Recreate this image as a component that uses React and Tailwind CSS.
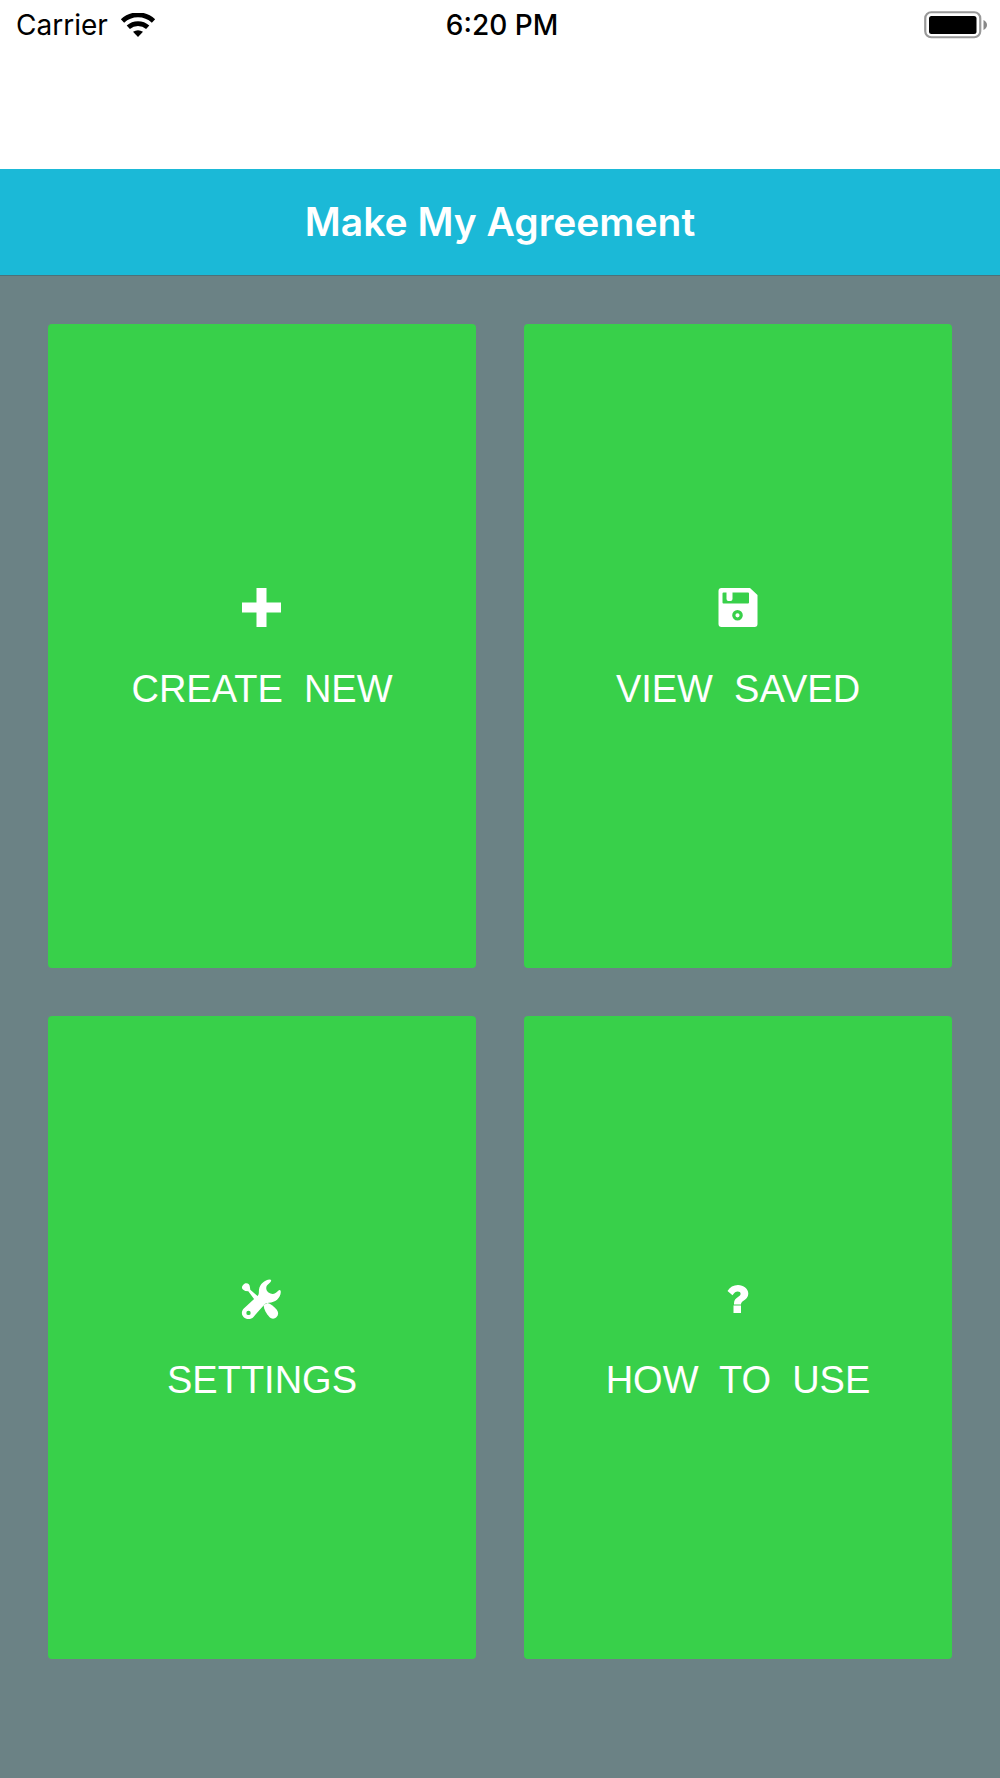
const iconProps = { className: 'size-10 overflow-visible', viewBox: '0 0 40 40', fill: 'currentColor', 'aria-hidden': true };

function PlusIcon() {
  return (
    <svg {...iconProps}>
      <path d="M14.500 1h10v14.500h14.500v10H24.500v14.500H14.500V25.500H0V15.500h14.500z" />
    </svg>
  );
}

function SaveIcon() {
  return (
    <svg {...iconProps} fillRule="evenodd">
      <path d="M3.500 1h28.500l7.500 7v29a3 3 0 0 1-3 3H3.500a3 3 0 0 1-3-3V4a3 3 0 0 1 3-3zM5.500 5.500a1 1 0 0 0-1 1V15.500a1 1 0 0 0 1 1h24.500a1 1 0 0 0 1-1V6.500a1 1 0 0 0-1-1H14.500v6.500a2 2 0 0 1-2 2h-2a2 2 0 0 1-2-2V5.500zM19.500 23a5.300 5.300 0 1 0 0 10.600a5.300 5.300 0 1 0 0-10.600zm0 3.200a2.100 2.100 0 1 1 0 4.200a2.100 2.100 0 1 1 0-4.200z" />
    </svg>
  );
}

function ToolsIcon() {
  return (
    <svg {...iconProps} fillRule="evenodd">
      <path d="M27.800 1.500C22.500 2 17.800 6 17 11.500C16.700 14 17.200 16 16 17.500L1.800 30.500C-2.500 35 1 41 6.500 41C8.500 41 10.200 40.200 11.500 38.900L22 27C23.300 25.300 25 24.900 27 24.800C33 24.500 38.600 20.300 38.800 14C38.800 11.700 37.600 11.300 36.200 12.800C33.500 16.100 30 16.900 26.500 14.500C23.200 11.500 23.500 8.100 27.300 5.300C29.400 3.700 30 1.700 27.800 1.500zM6.500 32.700a2.200 2.200 0 1 1 0 4.400a2.200 2.200 0 1 1 0-4.400z" />
      <path d="M4.200 5.300C6.500 5.300 7.800 6.800 7.900 9L8.300 11.800L17.500 19.700L13.500 23L6.300 13.200L3.300 12.900C1.500 12.500 -.2 11 0 9.300C.2 7.500 2.500 5.300 4.200 5.300z" />
      <path d="M21.500 27L25.500 25C28.500 25.700 31.500 28 34.800 31.800C36.700 34.300 36.500 37.100 34.600 39.100C32.500 41.200 29.500 41.200 27.400 39.100C24 35.300 22.200 32 21.500 27z" />
    </svg>
  );
}

function HelpIcon() {
  return (
    <svg {...iconProps}>
      <path d="M9.500 13C11.700 9 15.500 7 20 7C25.500 7 30.300 10.500 30.300 15.700C30.300 19.100 27.900 21.100 25.500 22.700C23.800 23.900 23 24.700 23 26.500H16V25.300C16 21.900 18 20.100 20.300 18.700C22 17.600 22.600 16.900 22.600 15.700C22.600 14.200 21.500 13.400 19.700 13.400C17.700 13.400 16.500 14.400 14.500 17.200zM15.500 27.500h7.500V35h-7.500z" />
    </svg>
  );
}

function WifiIcon() {
  return (
    <svg className="h-6 w-9" viewBox="0 0 36 24" aria-hidden="true">
      <path d="M2.500 8A22.500 22.500 0 0 1 33.500 8M8.300 14.300A14.500 14.500 0 0 1 27.700 14.300" fill="none" stroke="currentColor" strokeWidth="4.800" />
      <path d="M13 18.800Q18 15.600 23 18.800L18 24z" />
    </svg>
  );
}

function BatteryIcon() {
  return (
    <svg className="h-7 w-16" viewBox="0 0 64 28" aria-hidden="true">
      <rect x="1.250" y="1.250" width="55" height="25" rx="6" fill="none" stroke="#999" strokeWidth="2.200" />
      <rect x="5" y="5" width="47.500" height="18" rx="2.500" />
      <path d="M59.500 9Q63 11 63 14T59.500 19z" fill="#888" />
    </svg>
  );
}

const menuItems = [
  { label: 'CREATE  NEW', Icon: PlusIcon },
  { label: 'VIEW  SAVED', Icon: SaveIcon },
  { label: 'SETTINGS', Icon: ToolsIcon },
  { label: 'HOW  TO  USE', Icon: HelpIcon },
];

function MenuButton({ label, Icon }) {
  return (
    <button
      type="button"
      className="flex flex-col items-center justify-center gap-10 rounded-sm bg-[#38d04a] pt-1.5 text-white"
    >
      <Icon />
      <span className="whitespace-pre font-['Liberation_Sans',sans-serif] text-[38px] leading-11">{label}</span>
    </button>
  );
}

function App() {
  return (
    <div className="flex min-h-screen flex-col bg-[#6b8285] font-[Inter,sans-serif]">
      <div className="h-[169px] bg-white text-black">
        <div className="grid h-[50px] grid-cols-3 items-center pr-3 pl-4 text-[28px]">
          <div className="flex items-center gap-3">
            <span>Carrier</span>
            <WifiIcon />
          </div>
          <span className="text-center font-medium">6:20 PM</span>
          <div className="flex justify-end">
            <BatteryIcon />
          </div>
        </div>
      </div>

      <header className="flex h-[107px] items-center justify-center border-b border-[#4d7179] bg-[#1bb9d7]">
        <h1 className="text-[39px] font-semibold text-white">Make My Agreement</h1>
      </header>

      <main className="grid flex-1 grid-cols-2 grid-rows-2 gap-12 px-12 pt-12 pb-[119px]">
        {menuItems.map((item) => (
          <MenuButton key={item.label} {...item} />
        ))}
      </main>
    </div>
  );
}

export default App;
